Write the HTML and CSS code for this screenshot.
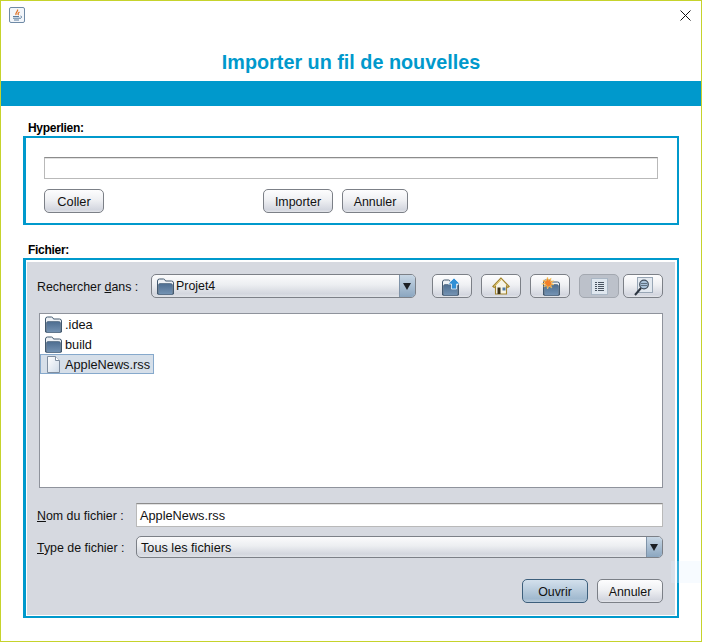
FILE: index.html
```html
<!DOCTYPE html>
<html lang="fr">
<head>
    <meta charset="UTF-8">
    <title>Importer un fil de nouvelles</title>
    <link rel="stylesheet" href="styles.css">
</head>
<body>
    <svg class="defs" width="0" height="0">
        <defs>
            <linearGradient id="folderFill" x1="0" y1="0" x2="0" y2="1">
                <stop offset="0" stop-color="#4d6d90"/>
                <stop offset="1" stop-color="#7594b4"/>
            </linearGradient>
            <linearGradient id="pageFill" x1="0" y1="0" x2="1" y2="1">
                <stop offset="0" stop-color="#ffffff"/>
                <stop offset="1" stop-color="#cfdbe8"/>
            </linearGradient>
            <symbol id="folder" viewBox="0 0 17 17">
                <path d="M.5 16V3q0-2 2-2h4q1 0 1.500 1l.5 1h6q2 0 2 2v11z" fill="#eef2f6" stroke="#43596f"/>
                <path d="M1.500 16.500V7q0-1.500 1.500-1.500h10.500q2 0 2 1.500v9.500z" fill="url(#folderFill)" stroke="#435a72" stroke-width=".6"/>
            </symbol>
        </defs>
    </svg>

    <div class="window">
        <div class="titlebar">
            <svg class="java-icon" width="16" height="16" viewBox="0 0 16 16">
                <rect x=".5" y=".5" width="15" height="15" rx="1.500" fill="#f3f6fa" stroke="#6f8aa6"/>
                <path d="M8.500 2.500c1 2-2.500 3-1.500 5.500M10.500 5c-1.500 1-2 2-.8 3" fill="none" stroke="#e0752a" stroke-width="1.300"/>
                <path d="M4 9.500h6M4 11.200h7M5 13h5" stroke="#5c7d9e"/>
                <path d="M11.500 9c1.500 0 1.500 2-.5 2.500" fill="none" stroke="#5c7d9e"/>
            </svg>
            <svg class="close-icon" width="11" height="11" viewBox="0 0 11 11">
                <path d="M.5.5l10 10M10.500.5l-10 10" stroke="#111" fill="none"/>
            </svg>
        </div>
        <h1 class="title">Importer un fil de nouvelles</h1>
        <div class="band"></div>

        <div class="section-label first">Hyperlien:</div>
        <div class="panel link-panel">
            <div class="text-field empty"></div>
            <div class="link-actions">
                <button class="btn coller">Coller</button>
                <button class="btn importer">Importer</button>
                <button class="btn annuler-link">Annuler</button>
            </div>
        </div>

        <div class="section-label second">Fichier:</div>
        <div class="panel file-panel">
            <div class="chooser">
                <div class="lookin">
                    <span class="lookin-label">Rechercher <u>d</u>ans :</span>
                    <div class="combo lookin-combo">
                        <svg class="combo-folder" width="17" height="17"><use href="#folder"/></svg>
                        <span>Projet4</span>
                        <span class="combo-arrow"></span>
                    </div>
                    <button class="tool up">
                        <svg width="20" height="19" viewBox="0 0 20 19">
                            <use href="#folder" width="17" height="17" x="0" y="2"/>
                            <path d="M12 1l6 6h-3.500v5h-5V7H6z" fill="#2f8fd6" stroke="#e9f4fc" stroke-width=".8"/>
                        </svg>
                    </button>
                    <button class="tool home">
                        <svg width="18" height="18" viewBox="0 0 18 18">
                            <path d="M9 1L.8 9.500l1.400 1L3.500 9v8h11V9l1.300 1.500 1.400-1z" fill="#f7f4e6" stroke="#a3842a" stroke-width="1.100"/>
                            <path d="M9 2.800L3.500 8.500 2.500 9.500" fill="none" stroke="#e0c25a"/>
                            <rect x="5.500" y="10.500" width="3" height="6.500" fill="#3b3118"/>
                            <rect x="10.500" y="10.500" width="3" height="3" fill="#4f7ba6"/>
                        </svg>
                    </button>
                    <button class="tool new-folder">
                        <svg width="19" height="19" viewBox="0 0 19 19">
                            <use href="#folder" width="17" height="17" x="2" y="2"/>
                            <path d="M6.500 0l1 3.200 2.700-2.200-.9 3.300 3.300-.5-2.500 2.300 2.900 1.500-3.300.4 1.100 2.900-2.800-1.800-1.500 2.900-.6-3.300-3.100 1.100 2-2.600L.5 7l3.200-.9L2 3l3 1.100z" fill="#f2802a" stroke="#fcd66e" stroke-width=".6"/>
                        </svg>
                    </button>
                    <button class="tool list-view active">
                        <svg width="17" height="17" viewBox="0 0 17 17">
                            <rect x=".5" y=".5" width="16" height="16" fill="#dfe7ef" stroke="#aab7c5"/>
                            <path d="M4 4.500h2M7 4.500h6M4 6.500h2M7 6.500h6M4 8.500h2M7 8.500h6M4 10.500h2M7 10.500h6M4 12.500h2M7 12.500h6" stroke="#4a5561"/>
                        </svg>
                    </button>
                    <button class="tool details-view">
                        <svg width="20" height="19" viewBox="0 0 20 19">
                            <rect x="4.500" y=".5" width="15" height="15" fill="#e3e9f0" stroke="#98a6b5"/>
                            <circle cx="11" cy="7.500" r="4.300" fill="#a9c2da" stroke="#3f4d5c" stroke-width="1.200"/>
                            <path d="M8 6.500h6M8 8.500h6" stroke="#3f4d5c" stroke-width=".7"/>
                            <path d="M8 11l-6 7" stroke="#2c3540" stroke-width="2"/>
                        </svg>
                    </button>
                </div>

                <div class="file-list">
                    <div class="file-row">
                        <svg width="17" height="17"><use href="#folder"/></svg>
                        <span>.idea</span>
                    </div>
                    <div class="file-row">
                        <svg width="17" height="17"><use href="#folder"/></svg>
                        <span>build</span>
                    </div>
                    <div class="file-row selected">
                        <svg width="15" height="17" viewBox="0 0 15 17">
                            <path d="M1.500.5h8l4 4v12h-12z" fill="url(#pageFill)" stroke="#7f8ea0"/>
                            <path d="M9.500.5v4h4" fill="#fff" stroke="#7f8ea0"/>
                        </svg>
                        <span>AppleNews.rss</span>
                    </div>
                </div>

                <div class="field-grid">
                    <span class="field-label"><u>N</u>om du fichier :</span>
                    <div class="text-field name-field">AppleNews.rss</div>
                    <span class="field-label"><u>T</u>ype de fichier :</span>
                    <div class="combo type-combo">
                        <span>Tous les fichiers</span>
                        <span class="combo-arrow"></span>
                    </div>
                </div>

                <div class="chooser-actions">
                    <button class="btn ouvrir">Ouvrir</button>
                    <button class="btn annuler-file">Annuler</button>
                </div>
            </div>
        </div>
        <div class="artefact"></div>
    </div>
</body>
</html>
```

FILE: styles.css
```css
* { box-sizing: border-box; }
html, body { margin: 0; padding: 0; }
body { font-family: "Liberation Sans", Arial, sans-serif; font-size: 12.4px; color: #111; background: #fff; }
u { text-underline-offset: 1px; }

.defs { position: absolute; }

.window { position: relative; width: 702px; height: 642px; border: 1px solid #c6d32c; background: #fff; overflow: hidden; }

.titlebar { height: 29px; display: flex; justify-content: space-between; align-items: center; padding: 0 10px 0 8px; }
.titlebar .java-icon { margin-top: -1px; }

.title { margin: 0; height: 51px; line-height: 64px; text-align: center; font-size: 19.8px; font-weight: bold; color: #0099cc; }
.band { height: 25px; background: #0099cc; }

.section-label { margin-left: 27px; height: 14px; line-height: 12px; font-weight: bold; font-size: 12px; letter-spacing: -.3px; color: #000; }
.section-label.first { margin-top: 16px; }
.section-label.second { margin-top: 19px; }

.panel { margin: 0 22px; border: 2px solid #0099cc; border-left-width: 3px; }
.link-panel { height: 89px; padding: 19px 19px 0 18px; }
.file-panel { height: 360px; padding: 2px 2px 1px 1px; }

.text-field { background: #fff; border: 1px solid #b9b9b9; border-top-color: #8c8c8c; box-shadow: inset 0 1px 0 #e2e2e2; }
.text-field.empty { height: 22px; }

.link-actions { display: flex; margin-top: 10px; }

.btn { height: 24px; padding: 1px 0 0; font-family: inherit; font-size: 12.4px; color: #111; border: 1px solid #7c8087; border-radius: 5px; background: linear-gradient(#fdfdfe 0%, #eff0f3 45%, #d3d6df 90%, #e4e6ea 100%); }
.coller { width: 60px; font-size: 12.8px; }
.importer { width: 70px; margin-left: 159px; }
.annuler-link { width: 66px; margin-left: 9px; }

.chooser { height: 100%; background: #d6d9e0; padding: 12px 12px 0 10px; }

.lookin { display: flex; align-items: center; height: 24px; }
.lookin-label { width: 114px; padding-top: 1px; }

.combo { display: flex; align-items: center; border: 1px solid #7c8087; border-radius: 5px; overflow: hidden; background: linear-gradient(#fbfbfc 0%, #eceef1 45%, #d3d6de 85%, #e0e3e8 100%); position: relative; }
.lookin-combo { width: 265px; height: 24px; padding-left: 5px; }
.combo-folder { margin-right: 2px; }
.combo-arrow { position: absolute; right: 0; top: 0; bottom: 0; width: 16px; background: linear-gradient(#c8d7e5, #8ba6c0); border-left: 1px solid #7f93a8; }
.combo-arrow::after { content: ""; position: absolute; left: 3px; top: 50%; margin-top: -3px; border: 4px solid transparent; border-top: 7px solid #1b1f24; border-bottom: 0; }

.tool { display: flex; align-items: center; justify-content: center; width: 40px; height: 24px; padding: 0; margin-left: 9px; border: 1px solid #7c8087; border-radius: 5px; background: linear-gradient(#fdfdfe 0%, #eff0f3 45%, #d3d6df 90%, #e4e6ea 100%); }
.tool.up { margin-left: 16px; }
.tool.active { background: #bcc1ca; border-color: #a3a8b0; }
.tool.details-view { margin-left: 4px; }

.file-list { height: 175px; margin: 15px 0 0 2px; background: #fff; border: 1px solid #8f939c; font-size: 12.75px; }
.file-row { display: flex; align-items: center; gap: 3px; height: 20px; padding-left: 5px; color: #111; }
.file-row.selected { width: 114px; background: #d6dfe9; border: 1px solid #86a9cc; padding-left: 5px; gap: 4px; }

.field-grid { display: grid; grid-template-columns: 99px 1fr; grid-template-rows: 24px 22px; row-gap: 9px; align-items: center; margin-top: 15px; }
.field-label { padding-top: 1px; }
.name-field { height: 24px; line-height: 24px; padding-left: 3px; font-size: 12.75px; }
.type-combo { height: 22px; padding: 1px 0 0 4px; font-size: 12.7px; }

.chooser-actions { display: flex; justify-content: flex-end; gap: 9px; margin-top: 21px; }
.ouvrir { width: 66px; border-color: #3d5f7c; background: linear-gradient(#d3e0ec 0%, #b9ccdd 45%, #a0b9cf 85%, #b7cadb 100%); }
.annuler-file { width: 66px; }

.artefact { position: absolute; right: 0; top: 560px; width: 30px; height: 22px; background: rgba(225, 240, 255, .25); }
```
